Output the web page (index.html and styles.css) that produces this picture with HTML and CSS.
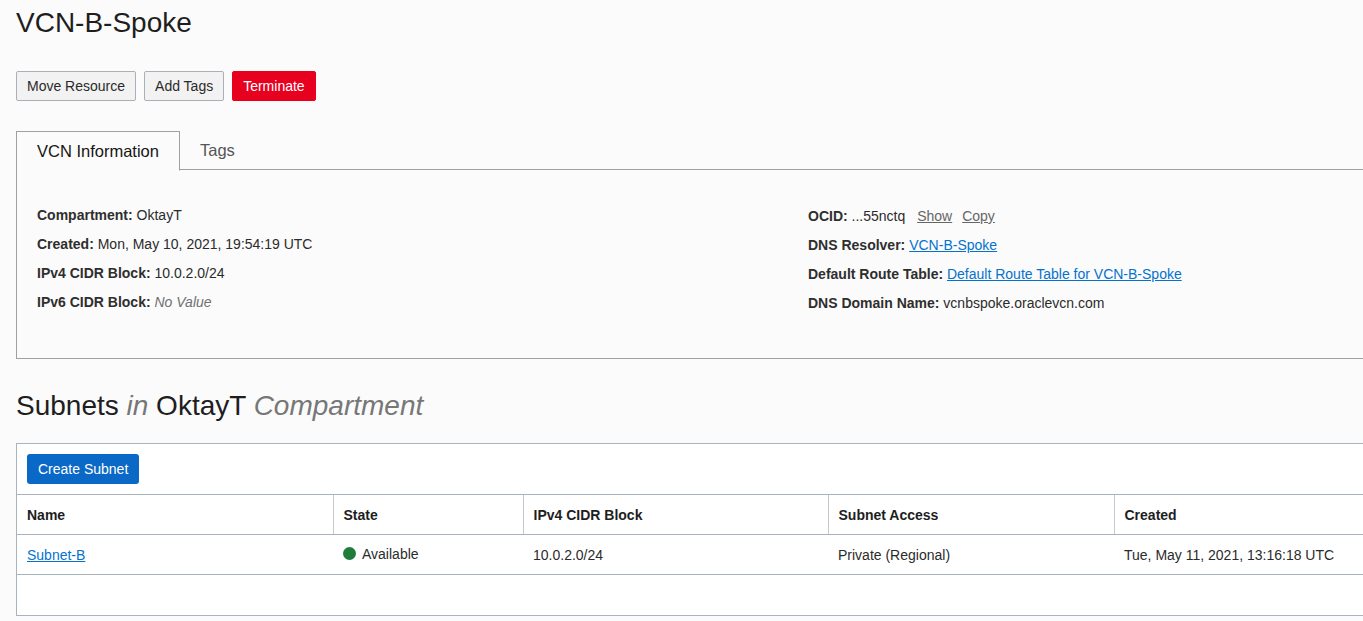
FILE: index.html
```html
<!DOCTYPE html>
<html>
<head>
<meta charset="utf-8">
<link rel="stylesheet" href="styles.css">
</head>
<body>
<div class="page">
  <h1 class="title">VCN-B-Spoke</h1>
  <div class="actions">
    <button class="btn">Move Resource</button>
    <button class="btn">Add Tags</button>
    <button class="btn btn-danger">Terminate</button>
  </div>

  <div class="tabs">
    <div class="tab active">VCN Information</div>
    <div class="tab">Tags</div>
    <div class="tab-fill"></div>
  </div>
  <div class="info">
    <div class="info-col">
      <div class="row"><b>Compartment:</b> OktayT</div>
      <div class="row"><b>Created:</b> Mon, May 10, 2021, 19:54:19 UTC</div>
      <div class="row"><b>IPv4 CIDR Block:</b> 10.0.2.0/24</div>
      <div class="row"><b>IPv6 CIDR Block:</b> <i class="muted">No Value</i></div>
    </div>
    <div class="info-col right">
      <div class="row"><b>OCID:</b> ...55nctq <a class="gray-link" href="#">Show</a><a class="gray-link" href="#">Copy</a></div>
      <div class="row"><b>DNS Resolver:</b> <a class="link" href="#">VCN-B-Spoke</a></div>
      <div class="row"><b>Default Route Table:</b> <a class="link" href="#">Default Route Table for VCN-B-Spoke</a></div>
      <div class="row"><b>DNS Domain Name:</b> vcnbspoke.oraclevcn.com</div>
    </div>
  </div>

  <h2 class="section-title">Subnets <i class="soft">in</i> OktayT <i class="soft">Compartment</i></h2>

  <div class="table-box">
    <div class="toolbar">
      <button class="btn-primary">Create Subnet</button>
    </div>
    <table class="grid">
      <colgroup>
        <col class="c1"><col class="c2"><col class="c3"><col class="c4"><col>
      </colgroup>
      <thead>
        <tr>
          <th>Name</th>
          <th>State</th>
          <th>IPv4 CIDR Block</th>
          <th>Subnet Access</th>
          <th class="last">Created</th>
        </tr>
      </thead>
      <tbody>
        <tr>
          <td><a class="link" href="#">Subnet-B</a></td>
          <td><span class="state"><span class="dot"></span>Available</span></td>
          <td>10.0.2.0/24</td>
          <td>Private (Regional)</td>
          <td>Tue, May 11, 2021, 13:16:18 UTC</td>
        </tr>
        <tr class="empty"><td colspan="5"></td></tr>
      </tbody>
    </table>
  </div>
</div>
</body>
</html>
```

FILE: styles.css
```css
html, body {
  margin: 0;
  padding: 0;
  overflow: hidden;
  background: #fbfbfb;
}
body {
  font-family: "Liberation Sans", Arial, sans-serif;
  color: #161513;
  font-size: 14px;
}
.page {
  width: 1420px;
  padding: 7px 0 0 16px;
}
.title {
  margin: 0;
  font-size: 28px;
  font-weight: normal;
  line-height: 32px;
  color: #1e1e1e;
}
.actions {
  display: flex;
  gap: 8px;
  margin-top: 32px;
}
.btn {
  height: 30px;
  padding: 0 10px;
  font-family: inherit;
  font-size: 14px;
  color: #2a2a2a;
  background: #f2f2f2;
  border: 1px solid #a9b0b8;
  border-radius: 2px;
}
.btn-danger {
  background: #e8001f;
  border-color: #e8001f;
  color: #fff;
}
.tabs {
  display: flex;
  margin-top: 30px;
  height: 39px;
}
.tab {
  padding: 0 20px;
  font-size: 16.5px;
  line-height: 38px;
  color: #555;
  border-bottom: 1px solid #a0a0a0;
}
.tab.active {
  color: #161513;
  border: 1px solid #a0a0a0;
  border-bottom: 1px solid transparent;
  padding: 0 20px;
  line-height: 38px;
  height: 38px;
}
.tab-fill {
  flex: 1;
  border-bottom: 1px solid #a0a0a0;
}
.info {
  display: grid;
  grid-template-columns: 771px 1fr;
  border-left: 1px solid #a0a0a0;
  border-bottom: 1px solid #a0a0a0;
  padding: 31px 0 40px 20px;
}
.info-col.right {
  padding-top: 1px;
}
.row {
  line-height: 29px;
  color: #2b2b2b;
}
.row b {
  color: #2e2e2e;
}
.muted {
  color: #707070;
}
.gray-link {
  color: #666;
  text-decoration: underline;
  margin-left: 8px;
}
.gray-link + .gray-link {
  margin-left: 10px;
}
.link {
  color: #0572ce;
  text-decoration: underline;
}
.section-title {
  margin: 31px 0 0;
  font-size: 28px;
  font-weight: normal;
  line-height: 32px;
  color: #1e1e1e;
}
.soft {
  color: #777;
}
.table-box {
  margin-top: 21px;
  border: 1px solid #a9b3bd;
  background: #fff;
}
.toolbar {
  padding: 10px;
  border-bottom: 1px solid #a9b3bd;
}
.btn-primary {
  height: 30px;
  padding: 0 11px;
  font-family: inherit;
  font-size: 14px;
  color: #fff;
  background: #0a68c6;
  border: none;
  border-radius: 3px;
}
.grid {
  width: 100%;
  table-layout: fixed;
  border-collapse: collapse;
}
.c1 { width: 316px; }
.c2 { width: 190px; }
.c3 { width: 305px; }
.c4 { width: 286px; }
.grid th {
  height: 39px;
  padding: 0 10px;
  text-align: left;
  font-weight: bold;
  color: #1e1e1e;
  border-right: 1px solid #c3c9d0;
  border-bottom: 1px solid #a9b3bd;
}
.grid th.last {
  border-right: none;
}
.grid td {
  height: 39px;
  padding: 0 10px;
  color: #2b2b2b;
  border-bottom: 1px solid #a9b3bd;
}
.grid tr.empty td {
  height: 40px;
  border-bottom: none;
}
.state {
  display: inline-flex;
  align-items: center;
  gap: 6px;
}
.dot {
  width: 13px;
  height: 13px;
  border-radius: 50%;
  background: #1e7d3a;
}
```
